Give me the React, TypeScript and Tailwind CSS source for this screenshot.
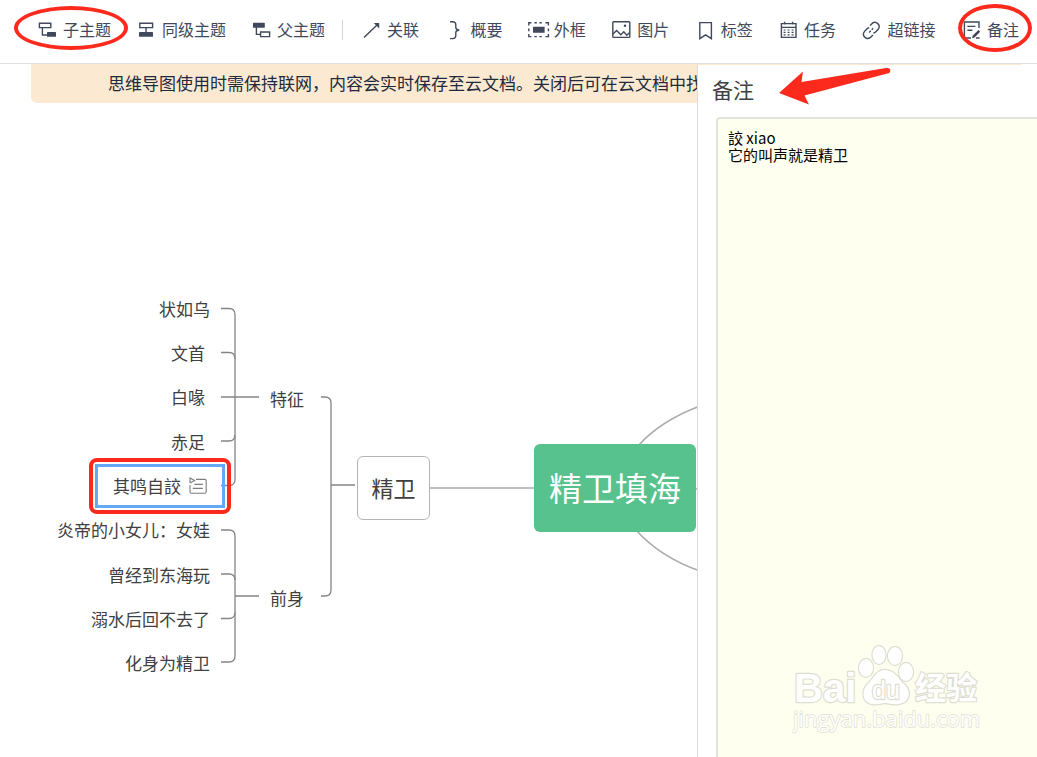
import React from 'react';

type Tool = { label: string; icon: React.ReactNode; ring?: string };

const structureTools: Tool[] = [
  {
    label: '子主题',
    ring: 'left-[-23px] top-[-12px] w-[114px] h-[44px]',
    icon: (
      <>
        <path d="M2.4 3.2h11.400v4.4h-11.400zM5.4 7.6v7.400h5" />
        <rect x="10" y="12" width="9" height="4.8" rx=".6" fill="currentColor" stroke="none" />
      </>
    ),
  },
  {
    label: '同级主题',
    icon: (
      <>
        <path d="M3.8 3.2h12.800v4.4h-12.800zM10 7.6v5" />
        <rect x="3" y="12" width="14" height="4.8" rx=".6" fill="currentColor" stroke="none" />
      </>
    ),
  },
  {
    label: '父主题',
    icon: (
      <>
        <rect x="2" y="2.8" width="11.8" height="5" rx=".6" fill="currentColor" stroke="none" />
        <path d="M5.4 7v7.400h4.200M9.6 12h9v4.600h-9z" />
      </>
    ),
  },
];

const insertTools: Tool[] = [
  {
    label: '关联',
    icon: (
      <>
        <path d="M3 17.6 16 5" />
        <path d="M12.8 3h5.4v5.4z" fill="currentColor" stroke="none" />
      </>
    ),
  },
  {
    label: '概要',
    icon: <path d="M6 1.8h2.4q3.400 0 3.400 3v2.6q0 2.2 3.4 2.600-3.400.4-3.400 2.6v3q0 3-3.400 3H6" />,
  },
  {
    label: '外框',
    icon: (
      <>
        <path d="M.8 5.4V2.8h2.6M6.4 2.8h2.4M11.4 2.8h2.4M17.400 2.8h3v2.6M20.400 8.6v2.6M20.400 14v2.6h-3M13.8 16.6h-2.4M8.8 16.6H6.4M3.4 16.6H.8V14M.8 11.2V8.6" />
        <rect x="5" y="6.800" width="11.600" height="6" rx=".4" fill="currentColor" stroke="none" />
      </>
    ),
  },
  {
    label: '图片',
    icon: (
      <>
        <rect x="1.8" y="1.8" width="17" height="15.6" rx=".8" />
        <path d="M2 14 5.600 10.400l4.200 4.400 3-3 3 3.400 2.800-2.600" />
        <circle cx="14" cy="5.8" r="1.2" fill="currentColor" stroke="none" />
      </>
    ),
  },
  {
    label: '标签',
    icon: <path d="M4.8 2.6h11.6v16l-5.8-3.8-5.8 3.8z" />,
  },
  {
    label: '任务',
    icon: (
      <>
        <path d="M3.400 3.6h14.600v13.8H3.400zM3.400 7.4h14.600M6.600 1.8v2.600M14.6 1.8v2.600" />
        <path d="M5.6 10h2M9.6 10h2M13.6 10h2M5.6 12.4h2M9.6 12.4h2M13.6 12.4h2M5.6 14.8h2M9.6 14.8h2M13.6 14.8h2" strokeWidth="1.2" />
      </>
    ),
  },
  {
    label: '超链接',
    icon: (
      <>
        <path d="M9 5.600 11.200 3.400a4.200 4.200 0 0 1 6 5.800l-2.400 2.600q-1 1-2.400 1.200" />
        <path d="M12 15 9.400 17.400a4.200 4.200 0 0 1-6-5.800L5.800 9q1-1 2.400-1.200" />
        <path d="m8.200 12.400 4-4.200" strokeDasharray="2.200 1.400" />
      </>
    ),
  },
  {
    label: '备注',
    ring: 'left-[-3px] top-[-14px] w-[74px] h-[48px]',
    icon: (
      <>
        <path d="M18 8V2H3.4v16H10M6.4 6.4h8M6.4 10.200h5M15 18h3.600" />
        <path d="m11 18.200.8-2.800 5.600-5.400 1.800 1.800-5.600 5.600z" fill="currentColor" stroke="none" />
      </>
    ),
  },
];

const nodes = [
  { text: '状如乌', place: 'left-[159px] top-[233px]' },
  { text: '文首', place: 'left-[171px] top-[277px]' },
  { text: '白喙', place: 'left-[171px] top-[321px]' },
  { text: '赤足', place: 'left-[171px] top-[366px]' },
  { text: '炎帝的小女儿：女娃', place: 'left-[57px] top-[454px]' },
  { text: '曾经到东海玩', place: 'left-[108px] top-[499px]' },
  { text: '溺水后回不去了', place: 'left-[91px] top-[543px]' },
  { text: '化身为精卫', place: 'left-[125px] top-[587px]' },
  { text: '特征', place: 'left-[270px] top-[323px]' },
  { text: '前身', place: 'left-[270px] top-[522px]' },
];

const ToolButton: React.FC<{ tool: Tool }> = ({ tool }) => (
  <button type="button" className="relative flex h-6 shrink-0 items-center gap-1.5 whitespace-nowrap">
    <svg viewBox="0 0 20 20" className="size-5 overflow-visible" fill="none" stroke="currentColor" strokeWidth="1.4" aria-hidden="true">
      {tool.icon}
    </svg>
    <span className="pb-0.5">{tool.label}</span>
    {tool.ring && <span className={`pointer-events-none absolute rounded-[50%] border-4 border-[#fc2a1c] ${tool.ring}`} />}
  </button>
);

const Toolbar: React.FC = () => (
  <header className="relative z-20 flex h-16 shrink-0 items-center border-b border-[#dfe1e4] bg-white pr-[18px] pb-[3px] pl-[37px] text-base text-[#3f495b]">
    <div className="flex gap-[25px]">
      {structureTools.map((tool) => (
        <ToolButton key={tool.label} tool={tool} />
      ))}
    </div>
    <span className="mr-[18px] ml-[17px] h-5 w-px shrink-0 bg-[#d3d6db]" />
    <div className="flex flex-1 justify-between">
      {insertTools.map((tool) => (
        <ToolButton key={tool.label} tool={tool} />
      ))}
    </div>
  </header>
);

const MindMap: React.FC = () => (
  <section className="absolute inset-0 overflow-hidden text-[17px] leading-6 text-[#404040]">
    <svg viewBox="0 64 720 693" width="720" height="693" className="absolute top-0 left-0" fill="none" stroke="#858585" strokeWidth="1.3" aria-hidden="true">
      {/* 特征 */}
      <path d="M221 308.5h8q6 0 6 6v165q0 6-6 6h-8" />
      <path d="M221 352.5h8q6 0 6 6M221 441h8q6 0 6-6M221 397h38" />
      {/* 前身 */}
      <path d="M221 530h8q6 0 6 6v120q0 6-6 6h-8" />
      <path d="M221 574h8q6 0 6 6M221 618.5h8q6 0 6-6M235 596h24" />
      {/* 精卫 */}
      <path d="M321 397h4q6 0 6 6v187q0 6-6 6h-4M331 485h24" />
      <g stroke="#aaa" strokeWidth="1.6">
        <path d="M430 488H534M696 489h24" />
        <path d="M638 446Q660 421 700 406M636 530Q660 557 700 571" />
      </g>
    </svg>

    {nodes.map((node) => (
      <div key={node.text} className={`absolute whitespace-nowrap ${node.place}`}>
        {node.text}
      </div>
    ))}

    <div className="absolute top-[394px] left-[89px] rounded-lg border-4 border-[#fc2a1c] p-0.5">
      <div className="flex h-11 w-[130px] items-center gap-2 border-[3px] border-[#64a9f5] pl-[15px]">
        <span>其鸣自詨</span>
        <svg viewBox="0 0 18 18" className="size-[18px]" fill="none" stroke="#7d7d7d" strokeWidth="1.1" aria-hidden="true">
          <path d="M7 2.4h8.8q1.4 0 1.4 1.4v11q0 1.4-1.4 1.4H2.4Q1 16.2 1 14.800V8" />
          <path d="M1 6V1l4.6 2.5L1 6M5.4 7.400h8.4M3.800 11.4h10" />
        </svg>
      </div>
    </div>

    <div className="absolute top-[392px] left-[357px] flex h-16 w-[73px] items-center justify-center rounded-md border border-[#b4b4b4] bg-white pb-[3px] text-[22px]">
      精卫
    </div>
    <div className="absolute top-[380px] left-[534px] flex h-[88px] w-[162px] items-center justify-center rounded-md bg-[#57c28d] pb-[3px] text-[33px] text-white">
      精卫填海
    </div>
  </section>
);

const Watermark: React.FC = () => (
  <svg
    viewBox="0 0 190 92"
    width="190"
    height="92"
    className="pointer-events-none absolute right-[55px] bottom-[20px]"
    fill="#fff"
    stroke="#deded2"
    strokeWidth="2.4"
    strokeLinejoin="round"
    paintOrder="stroke"
    aria-hidden="true"
  >
    <text x="2" y="57" className="font-['Liberation_Sans',sans-serif] text-[40px] font-bold">Bai</text>
    <ellipse cx="74" cy="23" rx="7" ry="9" />
    <ellipse cx="87" cy="10" rx="6.5" ry="9" />
    <ellipse cx="103" cy="11" rx="7" ry="9" />
    <ellipse cx="114" cy="27" rx="7" ry="9" />
    <path d="M93 25c-9 0-12 9-17 14-6 5-7 18 4 20 7 1 9-1 13-1s7 2 14 1c12-2 12-14 5-20-6-5-9-14-19-14z" />
    <text x="80" y="54" className="font-['Liberation_Sans',sans-serif] text-[25px]">du</text>
    <text x="123" y="54" className="text-[31px] font-bold">经验</text>
    <text x="1" y="82" strokeWidth="1.4" className="font-['Open_Sans',sans-serif] text-[22px]">jingyan.baidu.com</text>
  </svg>
);

const NotePanel: React.FC = () => (
  <aside className="absolute top-px right-0 bottom-0 flex w-[340px] flex-col overflow-hidden border-l border-[#dcdcdc] bg-white">
    <label htmlFor="note" className="pt-2 pl-3.5 text-[21px] leading-8 text-[#404040]">
      备注
    </label>
    <svg viewBox="0 0 112 38" width="112" height="38" className="absolute top-0.5 left-[81px]" fill="#fc2a1c" aria-hidden="true">
      <path d="M0 26 24 4.5 22.5 15 107 1q4-.5 4.3 2.2t-3 3.4L25.5 28.5 30 37.5z" />
    </svg>
    <textarea
      id="note"
      defaultValue={'詨 xiao\n它的叫声就是精卫'}
      className="mt-3 -mr-1 -mb-1 ml-[18px] flex-1 resize-none rounded-sm border-2 border-[#e2e3dc] bg-[#feffee] px-2.5 pt-2.5 text-[15px] leading-[17px] text-black outline-none"
    />
    <Watermark />
  </aside>
);

export default function App() {
  return (
    <div className="flex h-screen flex-col bg-white font-['Noto_Sans_CJK_SC',sans-serif]">
      <Toolbar />
      <main className="relative flex-1 overflow-hidden">
        <MindMap />
        <p className="relative mr-4 ml-[31px] overflow-hidden rounded-b-md bg-[#fce9d2] pt-[7px] pb-2 pl-[77px] text-[17px] leading-6 whitespace-nowrap text-[#222b3c]">
          思维导图使用时需保持联网，内容会实时保存至云文档。关闭后可在云文档中找
        </p>
        <NotePanel />
      </main>
    </div>
  );
}
